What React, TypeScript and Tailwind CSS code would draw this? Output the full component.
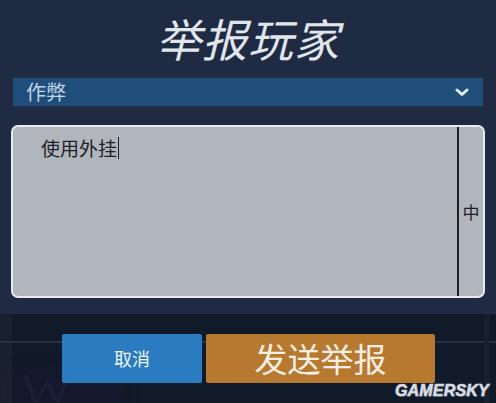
import React from 'react';

const cjk = { fontFamily: '"Noto Sans CJK SC", "Noto Sans", sans-serif' };

const App: React.FC = () => {
  return (
    <div className="w-[496px] h-[403px] overflow-hidden bg-[#1f2a43] flex flex-col" style={cjk}>
      {/* title */}
      <div className="h-[78px] flex items-center justify-center pb-[4px]">
        <h1 className="text-[45px] leading-none italic font-normal text-[#e1e5ec] tracking-[1px]">举报玩家</h1>
      </div>

      {/* reason dropdown */}
      <div className="mx-[13px] h-[28px] bg-[#1f4e7b] flex items-center justify-between pl-[13px] pr-[14px]">
        <span className="text-[20px] leading-none text-[#c3d3e6]">作弊</span>
        <svg width="14" height="9" viewBox="0 0 14 9">
          <path d="M2 2 L7 6.5 L12 2" fill="none" stroke="#e2eaf2" strokeWidth="3" strokeLinecap="round" strokeLinejoin="round" />
        </svg>
      </div>

      {/* text input with IME indicator */}
      <div className="mt-[19px] mx-[11px] h-[173px] bg-[#b1b5bc] border-2 border-[#e6e9ee] rounded-[7px] flex">
        <div className="flex-1 pl-[28px] pt-[9px]">
          <div className="flex items-center text-[19px] leading-[24px] text-[#1e2228]">
            <span>使用外挂</span>
            <span className="w-[1px] h-[22px] bg-[#1e2228] ml-[1px]" />
          </div>
        </div>
        <div className="w-[2px] bg-[#1b1f27]" />
        <div className="w-[24px] flex items-center justify-center">
          <span className="text-[17px] leading-none text-[#1e2228]">中</span>
        </div>
      </div>

      <div className="h-[16px]" />

      {/* footer */}
      <div className="relative flex-1 bg-[#111a29] flex">
        <div className="w-[12px] bg-[#192130]" />
        <div className="absolute left-0 right-0 top-[27px] h-[2px] bg-[#263244]" />
        <div className="absolute right-[6px] top-0 bottom-0 w-[6px] bg-[#172031]" />
        <svg className="absolute left-[22px] bottom-[-4px]" width="50" height="36" viewBox="0 0 50 36">
          <path d="M3 4 L14 32 L25 12 L36 32 L47 4" fill="none" stroke="#1a2335" strokeWidth="4" />
        </svg>
        <div className="absolute left-[24px] bottom-0 w-[90px] h-[26px] bg-[#1a1436] opacity-50 blur-[12px]" />

        <div className="relative flex pt-[20px] pl-[50px] gap-[4px]">
          <button className="w-[140px] h-[49px] bg-[#2a7bbf] rounded-[2px] flex items-center justify-center text-[18px] text-[#eef4fa]">
            取消
          </button>
          <button className="w-[229px] h-[49px] bg-[#b7792f] rounded-[2px] flex items-center justify-center text-[33px] text-[#f6efe4]">
            发送举报
          </button>
        </div>

        <span
          className="absolute right-[7px] bottom-[4px] text-[16px] leading-none font-bold italic text-[#d9dde3] tracking-[0.2px]"
          style={{
            fontFamily: '"Liberation Sans", Arial, sans-serif',
            textShadow: '1px 1px 0 #39404c',
            WebkitTextStroke: '0.6px #d9dde3',
          }}
        >
          GAMERSKY
        </span>
      </div>
    </div>
  );
};

export default App;
